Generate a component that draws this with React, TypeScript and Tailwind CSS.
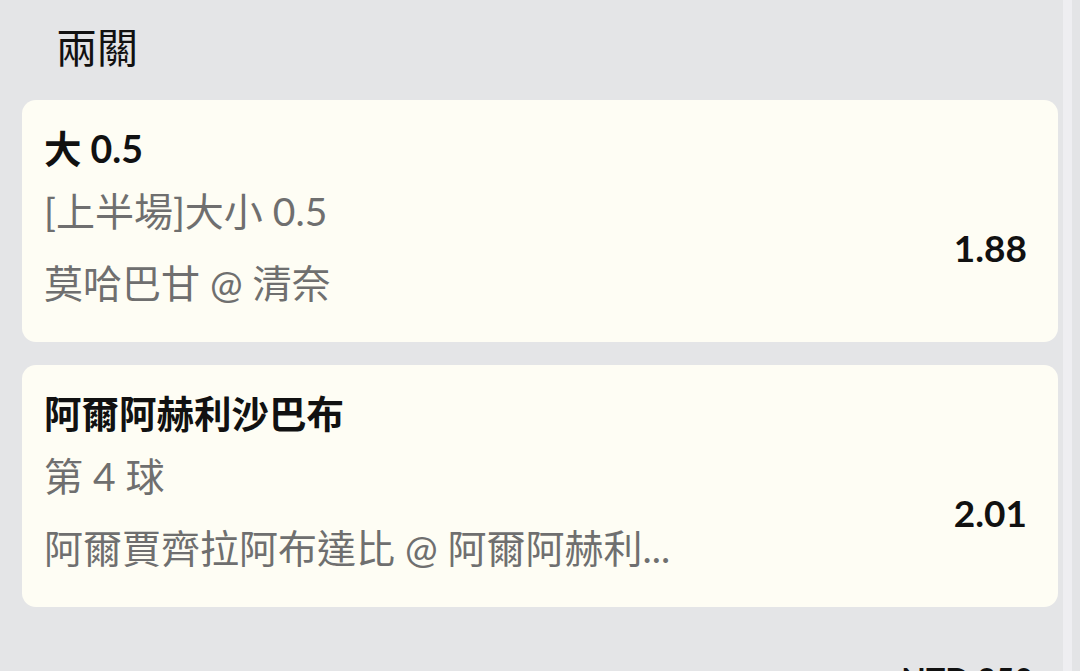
const font = { fontFamily: "Lato, 'Noto Sans CJK TC', sans-serif" };

type Leg = {
  pick: string;
  market: string;
  match: string;
  odds: string;
};

const legs: Leg[] = [
  { pick: "大 0.5", market: "[上半場]大小 0.5", match: "莫哈巴甘 @ 清奈", odds: "1.88" },
  {
    pick: "阿爾阿赫利沙巴布",
    market: "第 4 球",
    match: "阿爾賈齊拉阿布達比 @ 阿爾阿赫利...",
    odds: "2.01",
  },
];

const LegCard = ({ leg }: { leg: Leg }) => (
  <div className="shrink-0 h-[242px] rounded-[14px] bg-[#fefdf4] pl-[22px] pr-[31px] pt-[18px] flex justify-between items-start">
    <div className="flex flex-col min-w-0">
      <div className="text-[37.5px] leading-[62px] font-bold text-[#111111]">{leg.pick}</div>
      <div className="text-[39px] leading-[62px] text-[#6f6f6f]">{leg.market}</div>
      <div className="mt-[10px] text-[39px] leading-[62px] text-[#6f6f6f] whitespace-nowrap">
        {leg.match}
      </div>
    </div>
    <div className="mt-[110px] text-[37px] leading-[40px] font-bold text-[#111111]">{leg.odds}</div>
  </div>
);

export default function App() {
  return (
    <div className="h-[671px] w-[1080px] overflow-hidden bg-[#e4e5e7] flex" style={font}>
      <div className="w-[1063px] shrink-0 pl-[22px] pr-[5px] flex flex-col">
        <div className="shrink-0 h-[100px] pb-[4px] pl-[34px] flex items-center text-[41px] text-[#111111]">
          兩關
        </div>
        <div className="shrink-0 flex flex-col gap-[23px]">
          {legs.map((leg) => (
            <LegCard key={leg.odds} leg={leg} />
          ))}
        </div>
        <div className="shrink-0 mt-[53px] pr-[25px] flex justify-end text-[32px] leading-[40px] font-bold text-[#111111]">
          NTD 250
        </div>
      </div>
      <div className="w-[9px] shrink-0 bg-[#eeeef1]" />
      <div className="flex-1 bg-[#e3e4e6]" />
    </div>
  );
}
